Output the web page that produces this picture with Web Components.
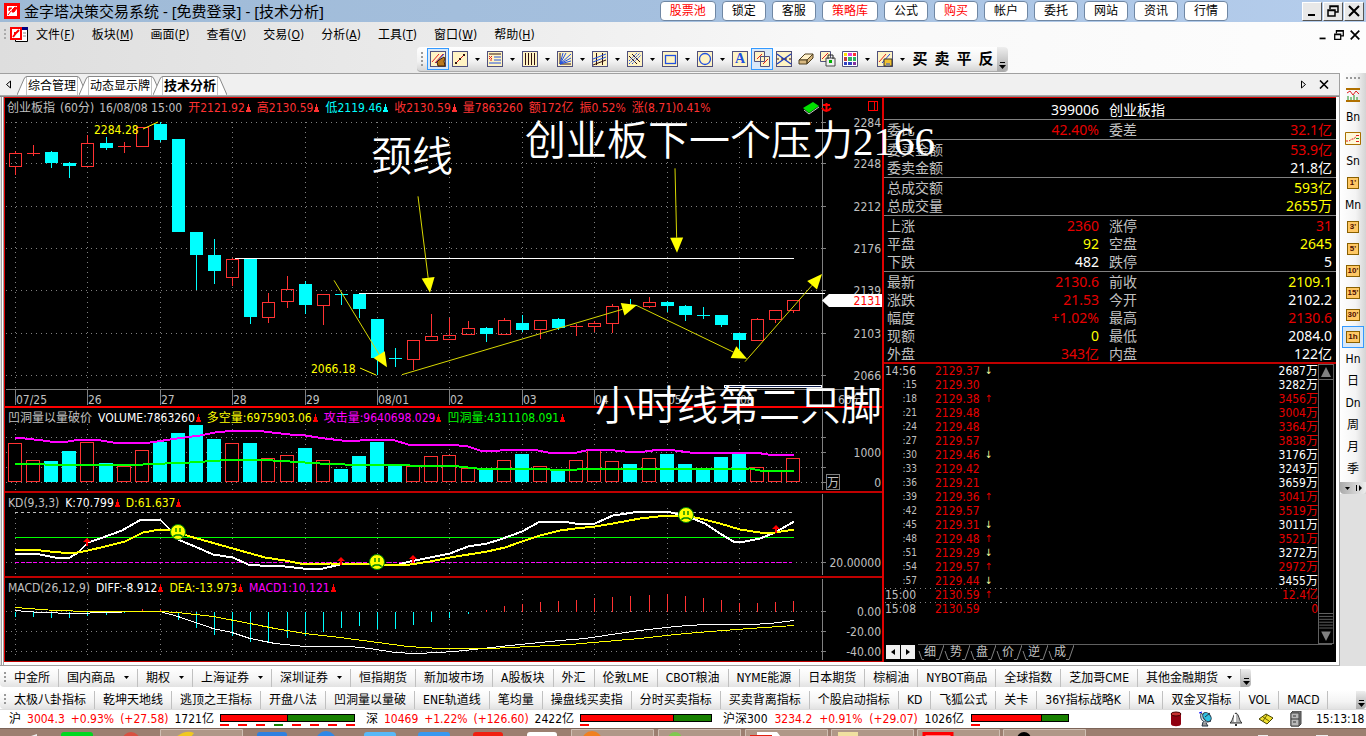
<!DOCTYPE html>
<html lang="zh-CN">
<head>
<meta charset="utf-8">
<title>金字塔决策交易系统</title>
<style>
  html, body { margin: 0; background: #fff; }
  body { font: 12px/16px "DejaVu Sans Condensed", "Noto Sans CJK SC", sans-serif; color: #000; overflow: hidden; }
</style>
</head>
<body>
<trade-app></trade-app>

<script>
const RED = '#ff3232', CYAN = '#00ffff', GREY = '#c0c0c0';

class Base extends HTMLElement {
  connectedCallback() {
    if (this.shadowRoot) return;
    this.attachShadow({ mode: 'open' }).innerHTML =
      `<style>*{box-sizing:border-box} button{font:inherit;color:inherit;margin:0;padding:0;border:0;background:none;white-space:nowrap} svg{display:block;flex:none} ${this.css()}</style>${this.html()}`;
  }
  css() { return ''; }
  html() { return '<slot></slot>'; }
}

/* ---------- icons ---------- */
const frame = inner => `<rect x=".5" y=".5" width="15" height="15" fill="#fff3c4" stroke="#50507c"/>${inner}`;
const ICONS = {
  draw: frame('<path d="M2 11L9 3M5 12l8-9" stroke="#e02020"/><path d="M6 12l8-9" stroke="#2040e0"/><path d="M7 11l2-2 5-3 1 2-1 2 1 5H8z" fill="#b87820" stroke="#402000"/>'),
  line: frame('<path d="M4 12l8-8" stroke="#d01010"/><path d="M3 11h2v2H3zM11 3h2v2h-2zM7 7h2v2H7z" fill="#301010"/>'),
  list: frame('<path d="M2 3h12" stroke="#301010"/><path d="M7 6h7M7 9h7M2 12h12" stroke="#2050e0"/><path d="M2 5l3 3M2 8l3-3M3 9h2" stroke="#e02020"/>'),
  bars: frame('<path d="M3.5 2v12M6.500 2v12M9.500 2v12M12.500 2v12" stroke="#301010"/>'),
  fan: frame('<path d="M3 2v11h11" stroke="#301010" fill="none"/><path d="M3 13L6 2M3 13l6-11M3 13L14 3M3 13l11-6M3 13l11-3" stroke="#2050e0"/>'),
  pitch: frame('<path d="M4.500 2v12M10.500 2v12M1 14l13-5" stroke="#301010"/><path d="M1 8l13-5M1 11l13-5" stroke="#2050e0"/>'),
  chan: frame('<path d="M2 5l8 8M5 3l8 8" stroke="#301010"/><path d="M2 10l8-8M5 13l9-9M2 13L13 2" stroke="#2050e0" stroke-dasharray="2 1"/>'),
  rect: frame('<rect x="3.500" y="4.500" width="10" height="8" fill="none" stroke="#2050e0" stroke-width="1.300"/>'),
  circle: frame('<circle cx="8" cy="8" r="5.500" fill="none" stroke="#2050e0" stroke-width="1.300"/>'),
  copy: '<path d="M.5.5h10v10H.5zM6.500 5.500h9v10h-9z" fill="#fff3c4" stroke="#50507c"/><path d="M3 8l5-5M9 13l5-5" stroke="#e02020"/>',
  cross: frame('<path d="M1 3l14 10M1 13L15 3" stroke="#2040c0" stroke-width="1.4"/><path d="M1 8h14" stroke="#301010" stroke-dasharray="2 2"/>'),
  eraser: '<path d="M1 9l6-6h8l-6 6z" fill="#fff0c8" stroke="#504020"/><path d="M1 9h8v4H1zM9 9l6-6v4l-6 6z" fill="#d8b880" stroke="#504020"/>',
  lock: '<path d="M.5.5h10v10H.5z" fill="#fff3c4" stroke="#50507c"/><path d="M2 8l6-6" stroke="#e02020"/><path d="M6 7h9v8H6z" fill="#eee" stroke="#444"/><path d="M8 8V4h5v4" fill="none" stroke="#222"/><path d="M9 9h3v3H9z" fill="#00b000"/>',
  palette: '<path d="M.5.5h15v15H.5z" fill="#fff" stroke="#50507c"/><path d="M2 2h3v3H2z" fill="#ffe000"/><path d="M6 2h4v3H6z" fill="#e040e0"/><path d="M11 2h3v3h-3z" fill="#ff3030"/><path d="M2 6h3v4H2z" fill="#c04040"/><path d="M6 6h4v4H6zM11 6h3v4h-3z" fill="#30b060"/><path d="M2 11h3v3H2zM6 11h4v3H6z" fill="#3040c0"/><path d="M11 11h3v3h-3z" fill="#8030a0"/>',
  save: frame('<path d="M2 11L9 3" stroke="#e02020"/><path d="M5 12l8-9" stroke="#2040e0"/><path d="M7 8h8v7H7z" fill="#f0c030" stroke="#333"/><path d="M9 12h4v3H9z" fill="#888"/>'),
  trend: '<path d="M1 2h14M1 14h14" stroke="#b07000" stroke-width="2"/><path d="M2 6l3-2 3 4 3-4 3 3" stroke="#e02020" fill="none"/><path d="M3 13V9M6 13v-3M9 13V8M12 13v-3" stroke="#209020"/>',
  flow: '<path d="M.5 1.500h15v12H.5z" fill="#fff8d8" stroke="#a87000"/><path d="M1 10h3l3-2h2l3-4" stroke="#e02020" fill="none" stroke-dasharray="2 1"/><path d="M11 4.500h3M11 10.500h3" stroke="#e02020"/><path d="M11 7.500h3" stroke="#209020"/>',
  db: '<path d="M3 3v10c0 3 10 3 10 0V3z" fill="#900010"/><ellipse cx="8" cy="3" rx="5" ry="2" fill="#c83030" stroke="#400"/>',
  dish: '<path d="M3 2c-2 8 4 11 10 8z" fill="#c8d8e0" stroke="#345"/><ellipse cx="9" cy="6" rx="5" ry="3.500" transform="rotate(50 9 6)" fill="#30c0e0" stroke="#234"/><path d="M7 6l5-4M5 11l-1 4h6l-2-3" stroke="#234" fill="#999"/><path d="M1 2l3-1" stroke="#00f"/>',
  bell: '<path d="M2 12c3-2 3-9 6-10 3 1 3 8 6 10z" fill="#b8b8b8" stroke="#333"/><path d="M7 3v8" stroke="#fff" stroke-width="2"/><path d="M7 13h2v2H7z" fill="#333"/>',
  mail: '<path d="M1 8l7-5 7 4-6 6z" fill="#f0e030" stroke="#444000"/><path d="M5 6l6 4M9 4l-4 6" stroke="#666000"/>',
  cabinet: '<path d="M3 2l2-2h8v13l-2 2H3z" fill="#777" stroke="#444"/><path d="M3 2h8v13H3z" fill="#b8b8b8" stroke="#444"/><path d="M3 8h8M5 5h3M5 11h3" stroke="#333"/>'
};
const icon = (n, s = 16) => `<svg width="${s}" height="${s}" viewBox="0 0 16 16" fill="none" aria-hidden="true">${ICONS[n]}</svg>`;
const caret = '<svg width="5" height="3" viewBox="0 0 5 3" aria-hidden="true"><path d="M0 0h5L2.500 3z"/></svg>';
const more = '<svg width="7" height="7" viewBox="0 0 7 7" aria-hidden="true"><path d="M1 0h5v1H1zM0 3h7L3.500 7z"/></svg>';
const logo = s => `<svg width="${s}" height="${s}" viewBox="0 0 16 16" aria-hidden="true"><path d="M1.500 1.500h13v13h-13z" fill="#fff" stroke="#f00" stroke-width="3"/><path d="M4 12l3-4M5 8V5h3M8 7l3-3 2 1-3 4H8z" stroke="#f00" fill="#f00"/></svg>`;

/* ---------- title bar ---------- */
customElements.define('title-bar', class extends Base {
  css() { return `:host{display:flex;align-items:center;height:22px;padding:0 2px 0 4px;background:linear-gradient(90deg,#9fbad6,#a5c0df 50%,#b5cdec)}
    h1{margin:0 auto 0 4px;font:15px/20px "Noto Sans","Noto Sans CJK SC",sans-serif;white-space:nowrap}
    nav{display:flex;gap:6px;margin-right:74px}
    nav button{height:20px;padding:0 9px;border:1px solid #6f87a4;border-radius:4px;background:#fff;line-height:18px}
    .hot{color:#f00}
    .win{display:flex;gap:1px}
    .win button{display:grid;place-items:center;width:20px;height:19px;background:#e8e8e8;border:1px solid;border-color:#fff #555 #555 #fff}`; }
  html() {
    const b = ['股票池*','锁定','客服','策略库*','公式','购买*','帐户','委托','网站','资讯','行情'];
    return `${logo(16)}<h1>金字塔决策交易系统 - [免费登录] - [技术分析]</h1>
    <nav>${b.map(t => `<button class="${t.endsWith('*') ? 'hot' : ''}">${t.replace('*', '')}</button>`).join('')}</nav>
    <div class="win">${win(14, 2)}</div>`;
  }
});
function win(s, w) {
  return [['最小化', `<path d="M3 11h7" stroke-width="${w}"/>`],
    ['还原', `<path d="M4 5V2h8v6h-3M2 6h7v6H2zM4 2.500h8M2 6.500h7" stroke-width="1.500"/>`],
    ['关闭', `<path d="M2 2l10 10M12 2L2 12" stroke-width="${w}"/>`]]
    .map(([l, p]) => `<button aria-label="${l}"><svg width="${s}" height="${s}" viewBox="0 0 14 14" fill="none" stroke="#000">${p}</svg></button>`).join('');
}

/* ---------- menu bar ---------- */
customElements.define('menu-bar', class extends Base {
  css() { return `:host{display:flex;align-items:center;height:24px;padding:2px 5px 0 4px}
    .grip{width:2px;height:12px;margin-right:4px;background:repeating-linear-gradient(#aaa 0 2px,transparent 2px 4px)}
    nav{display:flex;gap:17px;margin:0 auto 0 8px}
    .win{display:flex;gap:4px}`; }
  html() {
    const m = { 文件:'F', 板块:'M', 画面:'P', 查看:'V', 交易:'O', 分析:'A', 工具:'T', 窗口:'W', 帮助:'H' };
    return `<span class="grip"></span><svg width="18" height="18" viewBox="0 0 18 18" aria-hidden="true"><path d="M5.500 1.500h12v14h-12z" fill="#fff" stroke="#000"/><path d="M5 1h13v3H5z" fill="#000080"/><path d="M13 7h3M13 10h3" stroke="#888"/><path d="M1 2h10v11H1z" fill="#fff" stroke="#f00" stroke-width="2"/><path d="M3 11l3-4M4 7h2M6 7l3-3" stroke="#f00" stroke-width="2"/></svg>
    <nav>${Object.entries(m).map(([t, k]) => `<button>${t}(<u>${k}</u>)</button>`).join('')}</nav>
    <div class="win">${win(12, 2)}</div>`;
  }
});

/* ---------- drawing toolbar ---------- */
customElements.define('draw-toolbar', class extends Base {
  css() { return `:host{display:flex;height:27px;padding:1px 0 0 417px}
    .bar{display:flex;align-items:center;height:25px;border-radius:4px;background:linear-gradient(#fff,#f2f2f2 60%,#d4d4d4);border-bottom:1px solid #aaa}
    .grip{width:2px;height:14px;margin:0 4px;background:repeating-linear-gradient(#999 0 2px,transparent 2px 4px)}
    button{display:grid;place-items:center;width:22px;height:22px}
    .on{border:1px solid #3399ff;background:#d8e8f8}
    .drop{width:13px}
    .cn{font-weight:bold;font-size:15px}
    .abc{width:16px;height:16px;border:1px solid #50507c;background:#fff3c4;color:#2050e0;font:bold 14px/14px "Liberation Serif",serif;text-align:center}
    .cap{display:grid;place-items:end center;width:11px;height:24px;padding-bottom:2px;background:linear-gradient(#eee,#aaa);border-radius:0 4px 4px 0}`; }
  html() {
    const t = [['draw',0,1],['line',1],['list',1],['bars',1],['fan',1],['pitch',1],['chan',1],['rect',1],['circle',1],['A'],['copy',0,1],['cross'],['eraser'],['lock'],['palette',1],['save',1]];
    return `<div class="bar"><span class="grip"></span>${t.map(([n, d, on]) => `<button class="${on ? 'on' : ''}" aria-label="${n}">${n == 'A' ? '<span class="abc">A</span>' : icon(n)}</button>${d ? `<button class="drop" aria-label="${n} ▾">${caret}</button>` : ''}`).join('')}${['买','卖','平','反'].map(c => `<button class="cn">${c}</button>`).join('')}<span class="cap">${more}</span></div>`;
  }
});

/* ---------- document tabs ---------- */
customElements.define('doc-tabs', class extends Base {
  css() { return `:host{display:flex;align-items:center;height:21px;padding:0 8px 0 5px;background:#f0f0f0}
    .tabs{display:flex;align-self:end;margin:0 auto 0 5px}
    .tabs button{display:flex;height:19px;line-height:18px}
    .tabs button+button{margin-left:-8px}
    .tabs i{font-style:normal;border-top:1px solid #888;background:#fff;height:19px;padding:0 1px}
    .on{font-weight:bold;position:relative;font-size:13px}
    .end{display:flex;gap:11px;align-items:center}`; }
  html() {
    const e = d => `<svg width="10" height="19" viewBox="0 0 10 19" aria-hidden="true"><path d="${d}" fill="#fff" stroke="#888"/></svg>`;
    return `<button aria-label="向左"><svg width="7" height="9" viewBox="0 0 7 9"><path d="M5.500 1v7L1.500 4.500z" fill="none" stroke="#000"/></svg></button>
    <div class="tabs">${['综合管理','动态显示牌','技术分析'].map((t, n) => `<button class="${n == 2 ? 'on' : ''}">${e('M0 19L7 3q1-2.500 3-2.500V19')}<i>${t}</i>${e('M10 19L3 3Q2 .5 0 .5V19')}</button>`).join('')}</div>
    <div class="end"><button aria-label="向右"><svg width="7" height="9" viewBox="0 0 7 9"><path d="M1.500 1v7l4-3.500z" fill="none" stroke="#000"/></svg></button>
    <button aria-label="关闭"><svg width="13" height="9" viewBox="0 0 13 9"><path d="M2 .5l8 8M10 .5l-8 8" stroke="#000" stroke-width="1.600"/></svg></button></div>`;
  }
});

/* ---------- charts: vertical values are in thirds of a unit ---------- */
const xs = Array.from({ length: 44 }, (_, i) => Math.round(15 + i * 18.1));
const Y = v => Math.round(v / 3);
const days = ['07/25','26','27','28','29','08/01','02','03','04','05','08'];
const dots = (x1, y1, x2, y2) => `<path d="M${x1} ${y1}.5L${x2} ${y2}.5" stroke="#808080" stroke-dasharray="1 4"/>`;
const vdots = (a, b) => days.map((_, i) => `<path d="M${xs[i * 4]}.5 ${Y(a)}V${Y(b)}" stroke="#808080" stroke-dasharray="1 4"/>`).join('');
const hgrid = list => list.map(z => dots(6, Y(z), 822, Y(z)) + `<path d="M822 ${Y(z)}.5h4" stroke="#808080"/>`).join('');
const axisText = (z, t) => `<text x="881" y="${Y(z) + 5}" text-anchor="end">${t}</text>`;
const poly = (pts, c, w) => `<polyline points="${pts.map(([x, z]) => `${x},${Y(z) + .5}`).join(' ')}" fill="none" stroke="${c}" stroke-width="${w}"/>`;
const axis = (a, b) => `<path d="M822.500 ${a}V${b}" stroke="#808080"/>`;

class ChartPane extends Base {
  css() { return `:host{display:grid;background:#000;border-bottom:2px solid #c00000;color:${GREY}}
    :host([last]){border-bottom-width:1px}
    :host([active]){border-bottom-color:#ff0000}
    svg.plot,.legend{grid-area:1/1}
    svg.plot{width:100%;height:auto;shape-rendering:crispEdges}
    text{font:12px "DejaVu Sans Condensed","Noto Sans CJK SC",sans-serif;fill:${GREY}}
    .smooth{shape-rendering:geometricPrecision}
    .legend{display:flex;gap:6px;align-self:start;padding:2px 2px 0 3px;white-space:nowrap}
    .legend span{display:flex;align-items:center;gap:1px}`; }
  legend(items) {
    return `<div class="legend">${items.map(([t, c, up, uc]) => `<span style="color:${c}">${t}${up ? `<svg width="5" height="8" viewBox="0 0 5 8" aria-hidden="true"><path d="M2 0h1v3h1v3h1v2H0V6h1V3h1z" fill="${uc || '#ff0000'}"/></svg>` : ''}</span>`).join('')}</div>`;
  }
  svg(top, h, body) { return `<svg class="plot" viewBox="5 ${top} 877 ${h}" role="img" aria-label="图表">${body}</svg>`; }
}

customElements.define('price-pane', class extends ChartPane {
  css() { return super.css() + '.legend{padding-left:2px}.legend b{font-weight:normal;margin-right:4px}'; }
  html() {
    const d = [['r',168,175,212,240],['r',150,175,176,183],['c',168,171,204,219],['c',201,204,213,249],['r',120,145,212,212],['c',126,144,159,165],['r',141,153,156,174],['r',97,97,152,152],['c',80,87,135,141],['c',132,132,411,411],['c',411,411,480,585],['c',432,480,528,567],['r',490,492,545,573],['c',490,490,666,687],['r',594,622,665,684],['r',543,583,617,639],['c',558,567,630,657],['r',598,598,629,690],['c',590,597,600,630],['c',597,597,642,669],['c',672,672,789,840],['c',759,789,792,816],['r',736,736,791,825],['r',657,724,734,734],['r',669,721,731,731],['r',678,700,716,719],['c',696,699,717,741],['r',669,676,716,716],['c',660,684,705,711],['r',676,676,703,732],['c',669,672,699,705],['r',686,694,697,723],['r',678,685,692,710],['r',627,634,683,714],['c',612,630,633,645],['r',606,620,632,638],['c',618,621,633,651],['c',630,633,660,678],['c',636,660,663,672],['c',660,660,690,696],['c',714,714,735,766],['r',669,673,734,734],['r',646,646,671,684],['r',616,616,644,654]];
    const candles = d.map(([k, h, t, b, l], i) => {
      const x = xs[i], c = k == 'r' ? RED : CYAN, bh = Math.max(1, Y(b) - Y(t));
      return `<path d="M${x}.5 ${Y(h)}V${Y(t)}M${x}.5 ${Y(b)}V${Y(l)}" stroke="${c}"/>` +
        (k == 'c' || bh < 2 ? `<rect x="${x - 6}" y="${Y(t)}" width="13" height="${bh}" fill="${c}"/>`
          : `<rect x="${x - 6}.5" y="${Y(t)}.5" width="12" height="${bh}" fill="none" stroke="${c}"/>`);
    }).join('');
    const arrow = (x1, a, x2, b) => {
      const y1 = a / 3, y2 = b / 3, L = Math.hypot(x2 - x1, y2 - y1), u = (x2 - x1) / L, v = (y2 - y1) / L, bx = x2 - u * 15, by = y2 - v * 15;
      return `<path d="M${x1} ${y1}L${bx} ${by}" stroke="#d8d800"/><path d="M${x2} ${y2}L${bx - v * 6.5} ${by + u * 6.5}L${bx + v * 6.5} ${by - u * 6.5}z" fill="#ffff00"/>`;
    };
    const g = { 82:2284, 205:2248, 334:2212, 460:2176, 586:2139, 713:2103, 841:2066 };
    return this.svg(3, 308, vdots(80, 883) + hgrid(Object.keys(g)) + Object.entries(g).map(([z, t]) => axisText(z, t)).join('') + axis(4, 310) +
      '<path d="M6 294.500H881" stroke="#808080"/>' +
      days.map((t, i) => `<path d="M${xs[i * 4]}.5 294V310" stroke="#808080"/><text x="${xs[i * 4] + 1}" y="309">${t}</text>`).join('') + '<text x="838" y="309">60分</text>' +
      candles + '<path d="M235 163.500H794M359 198.500H825" stroke="#fff"/>' +
      `<g class="smooth">${arrow(334,556,387,817)}${arrow(402,839,637,630)}${arrow(637,632,747,791)}${arrow(745,800,822,537)}${arrow(418,304,430,593)}${arrow(675,220,677,473)}
        <path d="M143 34l15-7M360 273l16 7" stroke="#ffff00"/><path d="M822 205.500l7-6.500h53v13h-53z" fill="#fff"/></g>` +
      '<text x="94" y="39" style="fill:#ff0">2284.28</text><text x="311" y="278" style="fill:#ff0">2066.18</text><text x="881" y="210" text-anchor="end" style="fill:#f00">2131</text>' +
      '<rect x="724.500" y="290.500" width="97" height="2" fill="#102050" stroke="#fff"/>' +
      '<g class="smooth"><path d="M803 13l10-6 6 4-10 7z" fill="#00e000"/><path d="M804 15l5 4 10-7" stroke="#ccc" fill="none"/><path d="M826.500 8v8M823 10h7M822 13q4 6 9 0" stroke="#f00" stroke-width="2" fill="none"/></g><path d="M868.500 6.500h9v9h-9zM874.500 6v9" fill="none" stroke="#f00"/>')
      + this.legend([['<b>创业板指</b><b>(60分)</b>16/08/08 15:00', GREY], ['开2121.92', RED, 1, RED], ['高2130.59', RED, 1, RED], ['低2119.46', CYAN, 1, CYAN], ['收2130.59', RED, 1, RED], ['量7863260', RED], ['额172亿', RED], ['振0.52%', RED], ['涨(8.71)0.41%', RED]]);
  }
});

customElements.define('volume-pane', class extends ChartPane {
  html() {
    const v = 'r175 r226 c228 c198 r172 c234 r242 r196 c171 c144 c120 c162 r175 c174 r220 r211 c189 r226 c252 c213 c171 c243 r244 r214 r211 r250 c255 r226 c207 r244 c255 r226 r195 r229 c237 r220 c207 c237 c250 c216 c207 r247 r256 r220'.split(' ');
    const bars = v.map((s, i) => { const y = Y(s.slice(1)), x = xs[i] - 7;
      return s[0] == 'c' ? `<rect x="${x}" y="${y}" width="14" height="${97 - y}" fill="${CYAN}"/>` : `<rect x="${x}.5" y="${y}.5" width="13" height="${96 - y}" fill="#000" stroke="${RED}"/>`; }).join('');
    const m = [[15,156],[25,159],[43,166],[50,168],[68,168],[80,162],[95,162],[113,171],[143,174],[150,171],[177,160],[200,150],[215,142],[235,135],[255,136],[272,141],[290,148],[305,149],[325,160],[342,164],[360,164],[380,162],[395,165],[408,176],[450,177],[468,183],[480,194],[500,194],[515,191],[533,193],[548,201],[577,201],[590,192],[605,191],[625,197],[645,198],[660,193],[675,194],[690,201],[755,201],[768,206],[794,206]];
    const g = [[15,234],[45,237],[105,237],[120,240],[143,238],[165,234],[190,232],[205,227],[235,222],[255,223],[290,228],[320,233],[345,237],[395,237],[410,240],[450,240],[477,248],[540,248],[550,252],[577,252],[590,248],[680,248],[690,252],[750,249],[760,254],[794,254]];
    return this.svg(23, 83, vdots(118, 315) + hgrid([157,202,247,292]) + axis(24, 105) + bars + poly(m, '#ff00ff', 2) + poly(g, '#00ff00', 2) +
      axisText(202, '1000') + axisText(292, '0') + '<rect x="826.500" y="89.500" width="13" height="15" fill="#000" stroke="#808080"/><text x="827" y="102">万</text>')
      + this.legend([['凹洞量以量破价', GREY], ['VOLUME:7863260', '#fff', 1], ['多空量:6975903.06', '#ff0', 1], ['攻击量:9640698.029', '#f0f', 1], ['凹洞量:4311108.091', '#0f0', 1]]);
  }
});

customElements.define('kd-pane', class extends ChartPane {
  html() {
    const k = [[15,507],[35,503],[55,517],[70,516],[78,500],[88,470],[100,460],[122,435],[141,402],[160,402],[168,425],[178,462],[195,483],[213,507],[233,517],[248,537],[260,541],[285,543],[303,549],[323,549],[340,537],[360,534],[395,540],[410,528],[450,503],[468,482],[487,475],[500,462],[522,437],[540,408],[563,408],[575,413],[595,414],[613,390],[640,379],[667,378],[675,385],[695,402],[705,415],[720,445],[735,470],[745,468],[760,459],[775,440],[794,407]];
    const d = [[15,491],[32,492],[50,499],[72,504],[88,496],[105,483],[125,467],[143,442],[160,431],[170,435],[190,452],[215,475],[240,495],[265,515],[285,525],[305,537],[330,534],[375,536],[410,537],[430,527],[450,517],[487,497],[505,486],[522,467],[540,450],[560,434],[575,428],[595,424],[613,413],[640,400],[667,391],[685,390],[700,400],[720,413],[740,433],[760,441],[775,440],[794,432]];
    const face = (x, z) => `<g class="smooth" transform="translate(${x} ${Y(z)})"><circle r="7.500" fill="#ff0" stroke="#080"/><path d="M-2 -4v4M2 -4v4M-4 5v-1l2-1h4l2 1v1" fill="none" stroke="#080" stroke-width="1.400"/></g>`;
    const up = (x, z) => `<path class="smooth" d="M${x} ${Y(z) - 4}l4 4h-3v4h-2v-4h-3z" fill="#f00"/>`;
    return this.svg(108, 83, vdots(370, 570) + hgrid([532]) + axis(109, 190) +
      '<path d="M15 127.500H792" stroke="#c0c0c0" stroke-dasharray="3 3"/><path d="M15 152.500H794" stroke="#00ff00"/><path d="M15 177.500H792" stroke="#ff00ff" stroke-dasharray="4 2"/>' +
      poly(k, '#fff', 2) + poly(d, '#ff0', 2) + face(178,441) + face(377,532) + face(686,391) + up(87,470) + up(341,528) + up(413,523) + up(776,432) + axisText(532, '20.00000'))
      + this.legend([['KD(9,3,3)', GREY], ['K:70.799', '#fff', 1], ['D:61.637', '#ff0', 1]]);
  }
});

customElements.define('macd-pane', class extends ChartPane {
  html() {
    const h = [696,696,699,699,693,690,684,672,672,705,729,750,753,771,771,759,753,741,729,723,732,732,720,711,699,687,675,663,657,651,648,645,640,636,633,630,628,633,640,645,653,654,651,648];
    const bars = h.map((z, i) => `<path d="M${xs[i]}.5 227V${Y(z)}" stroke="${z > 680 ? CYAN : RED}"/>`).join('');
    const a = [[15,676],[40,682],[75,685],[105,682],[140,678],[160,677],[178,693],[213,729],[232,740],[250,760],[275,774],[305,783],[350,784],[370,790],[395,801],[415,804],[440,800],[465,795],[500,783],[530,773],[560,764],[585,760],[605,750],[640,734],[675,724],[705,718],[750,718],[770,714],[794,706]];
    const b = [[15,667],[55,674],[90,677],[120,679],[160,677],[178,680],[213,693],[250,713],[275,728],[305,743],[340,757],[378,772],[408,783],[440,790],[490,790],[530,783],[570,777],[605,768],[640,758],[675,746],[710,737],[750,730],[794,721]];
    return this.svg(193, 83, vdots(627, 822) + hgrid([679,739,799]) + axis(194, 275) + bars + poly(a, '#fff', 1) + poly(b, '#ff0', 1) +
      axisText(679, '0.00') + axisText(739, '-20.00') + axisText(799, '-40.00'))
      + this.legend([['MACD(26,12,9)', GREY], ['DIFF:-8.912', '#fff', 1], ['DEA:-13.973', '#ff0', 1], ['MACD1:10.121', '#f0f', 1]]);
  }
});

/* free-hand captions placed by the user over the charts */
customElements.define('chart-note', class extends Base {
  css() { return ':host{position:absolute;z-index:2;color:#fff;font:350 41px/41px "Liberation Serif","Noto Sans CJK SC DemiLight","Noto Sans CJK SC",serif;white-space:nowrap}'; }
});

customElements.define('chart-area', class extends Base {
  css() { return ':host{display:block;position:relative;flex:1;min-width:0;border:solid #e00000;border-width:0 2px 0 1px}'; }
  html() { return `<price-pane active></price-pane><volume-pane></volume-pane><kd-pane></kd-pane><macd-pane last></macd-pane>
    <chart-note style="left:366px;top:39px">颈线</chart-note><chart-note style="left:520px;top:23px">创业板下一个压力2166</chart-note><chart-note style="left:590px;top:288px">小时线第二只脚</chart-note>`; }
});

/* ---------- quote panel ---------- */
customElements.define('quote-table', class extends Base {
  css() { return `:host{display:block;color:${GREY};font:14px/18px "Noto Sans","Noto Sans CJK SC",sans-serif}
    table{width:100%;border-collapse:separate;border-spacing:0;table-layout:fixed;border-bottom:1px solid #808080;padding:0 4px 1px 3px}
    table:last-child{border-bottom:2px solid #c00000;padding-bottom:0}
    col.l{width:60px} col.v{width:152px} col.m{width:70px}
    th,td{padding:0;height:18px;line-height:16px;vertical-align:bottom;font-weight:normal;text-align:left;white-space:nowrap}
    th+td{text-align:right} td+th{padding-left:10px}
    .head th,.head td{color:#fff;padding-top:2px;height:20px}
    table:last-child td{height:18px}
    .r{color:#e60000}.y{color:#ff0}.w{color:#fff}`; }
  html() {
    const G = [
      [['','399006 w','创业板指','']],
      [['委比','42.40% r','委差','32.1亿 r']],
      [['委买金额','','','53.9亿 r'],['委卖金额','','','21.8亿 w']],
      [['总成交额','','','593亿 y'],['总成交量','','','2655万 y']],
      [['上涨','2360 r','涨停','31 r'],['平盘','92 y','空盘','2645 y'],['下跌','482 w','跌停','5 w']],
      [['最新','2130.6 r','前收','2109.1 y'],['涨跌','21.53 r','今开','2102.2 w'],['幅度','+1.02% r','最高','2130.6 r'],['现额','0 y','最低','2084.0 w'],['外盘','343亿 r','内盘','122亿 w']]
    ];
    const td = s => { const [t = '', c = ''] = s.split(' '); return `<td class="${c}">${t}</td>`; };
    return G.map((g, i) => `<table class="${i ? '' : 'head'}"><colgroup><col class="l"><col class="v"><col class="m"><col></colgroup>${g.map(r => `<tr><th>${r[0]}</th>${td(r[1])}<th>${r[2]}</th>${td(r[3])}</tr>`).join('')}</table>`).join('');
  }
});

customElements.define('tick-list', class extends Base {
  css() { return `:host{display:flex;flex:1;align-items:stretch;padding:0 2px 0 1px;color:${GREY}}
    table{flex:1;align-self:start;border-collapse:separate;border-spacing:0;table-layout:fixed;width:0}
    col.t{width:50px} col.p{width:50px} col.a{width:16px}
    td,th{height:14px;padding:0;line-height:14px;font-weight:normal;text-align:left;white-space:nowrap}
    td:last-child{text-align:right}
    th.s{font-size:10px;text-align:right;padding-right:18px;line-height:12px}
    tr.dot td,tr.dot th{background:repeating-linear-gradient(90deg,#808080 0 1px,transparent 1px 5px) top/100% 1px no-repeat}
    .r{color:#e60000}.w{color:#fff}.u{color:#e60000}.d{color:#ffffa0}
    .u,.d{font-size:10px}
    .sb{display:flex;flex-direction:column;justify-content:space-between;width:16px;border:1px solid #606060}
    .sb svg+svg{border-top:1px solid #606060}`; }
  html() {
    const R = `14:56 2129.37 ↓ 2687万 w|:15 2129.30 - 3282万 w|:18 2129.38 ↑ 3456万 r|:21 2129.48 - 3004万 r|:24 2129.48 - 3364万 r|:27 2129.57 - 3838万 r|:30 2129.46 ↓ 3176万 w|:33 2129.42 - 3243万 w|:36 2129.21 - 3659万 w|:39 2129.36 ↑ 3041万 r|:42 2129.57 - 3519万 r|:45 2129.31 ↓ 3011万 w|:48 2129.48 ↑ 3521万 r|:51 2129.29 ↓ 3272万 w|:54 2129.57 ↑ 2972万 r|:57 2129.44 ↓ 3455万 w|15:00 2130.59 ↑ 12.4亿 r|15:08 2130.59 - 0 r`.split('|').map(s => s.split(' '));
    return `<table><colgroup><col class="t"><col class="p"><col class="a"><col></colgroup>${R.map(([t, p, a, v, c], i) => `<tr class="${i > 15 ? 'dot' : ''}"><th class="${t[0] == ':' ? 's' : ''}">${t}</th><td class="r">${p}</td><td class="${a == '↑' ? 'u' : 'd'}">${a == '-' ? '' : a}</td><td class="${c}">${v}</td></tr>`).join('')}</table>
    <div class="sb" aria-hidden="true"><svg width="14" height="15" viewBox="0 0 14 15"><path d="M7 2l5 10H2z" fill="#808080"/><path d="M0 14.500h14" stroke="#606060"/></svg>
    <svg width="14" height="30" viewBox="0 0 14 30"><path d="M0 2.500h14M0 5.500h14M0 8.500h14M0 11.500h14M0 14.500h14" stroke="#606060"/><path d="M7 28L2 18h10z" fill="#808080"/></svg></div>`;
  }
});

customElements.define('quote-tabs', class extends Base {
  css() { return `:host{display:flex;height:18px;padding:0 4px 1px 2px;color:${GREY}}
    .n{display:grid;place-items:center;width:14px;height:14px;margin:1px 1px 0 0;background:#f0f0f0}
    .t{display:flex;flex:1;border-top:1px solid #606060;margin-left:2px}
    .t button{width:26px;height:15px;line-height:15px;display:flex;font-size:12px}`; }
  html() {
    return `<button class="n" aria-label="上一页"><svg width="4" height="6" viewBox="0 0 4 6"><path d="M4 0v6L0 3z"/></svg></button><button class="n" aria-label="下一页"><svg width="4" height="6" viewBox="0 0 4 6"><path d="M0 0v6l4-3z"/></svg></button>
    <div class="t">${['细','势','盘','价','逆','成'].map(c => `<button><svg width="6" height="15" viewBox="0 0 6 15" aria-hidden="true"><path d="M1 6l3 8.500h2" stroke="#808080" fill="none"/></svg>${c}<svg width="8" height="15" viewBox="0 0 8 15" aria-hidden="true"><path d="M0 14.500h3L8 0" stroke="#808080" fill="none"/></svg></button>`).join('')}</div>`;
  }
});

customElements.define('quote-panel', class extends Base {
  css() { return ':host{display:flex;flex-direction:column;width:452px;background:#000}'; }
  html() { return '<quote-table></quote-table><tick-list></tick-list><quote-tabs></quote-tabs>'; }
});

/* ---------- period bar at the right edge ---------- */
customElements.define('period-bar', class extends Base {
  css() { return `:host{display:block;width:26px;background:#e0e0e0}
    .bar{display:flex;flex-direction:column;align-items:center;padding-top:4px;background:linear-gradient(90deg,#fff,#f4f4f4 60%,#d4d4d4)}
    .grip{width:14px;height:2px;margin-bottom:5px;background:repeating-linear-gradient(90deg,#999 0 2px,transparent 2px 4px)}
    button{display:grid;place-items:center;width:22px;height:22px}
    .on{border:1px solid #3399ff;background:#d8e8f8}
    i{font:bold 8px/10px "Liberation Sans",sans-serif;min-width:12px;height:12px;padding:0 1px;text-align:center;border:1px solid #8a6000;background:#ffc864;color:#501000}
    .cap{display:flex;justify-content:center;align-items:center;gap:6px;width:100%;height:12px;margin-top:2px;background:linear-gradient(90deg,#aaa,#eee);border-radius:0 0 4px 4px}`; }
  html() {
    const p = ['@trend','Bn','@flow','Sn',"#1'",'Mn',"#3'","#5'","#10'","#15'","#30'",'#1h','Hn','日','Dn','周','月','季'];
    return `<div class="bar"><span class="grip"></span>${p.map(t => t[0] == '@' ? `<button aria-label="${t.slice(1)}">${icon(t.slice(1))}</button>` : t[0] == '#' ? `<button class="${t == '#1h' ? 'on' : ''}"><i>${t.slice(1)}</i></button>` : `<button>${t}</button>`).join('')}<span class="cap">${caret}<svg width="6" height="6" viewBox="0 0 6 6"><path d="M0 0h1v6H0zM3 0l3 3-3 3z"/></svg></span></div>`;
  }
});

/* ---------- bottom link bars ---------- */
customElements.define('link-bar', class extends Base {
  css() { return `:host{display:flex;align-items:center;height:19px;background:linear-gradient(#fff,#f4f4f4 60%,#e2e2e2);border-radius:4px;overflow:hidden}
    .grip{width:2px;height:12px;margin:0 0 0 4px;background:repeating-linear-gradient(#999 0 2px,transparent 2px 4px)}
    button{display:flex;align-items:center;gap:9px;height:18px;padding:0 8px;border-right:1px solid #c0c0c0}
    .cap{display:grid;place-items:end center;width:10px;height:18px;padding-bottom:2px;background:linear-gradient(#eee,#aaa)}
    :host([wide]) .cap{margin-left:auto}`; }
  html() {
    const items = this.getAttribute('items').split(',');
    return `<span class="grip"></span>${items.map(t => `<button>${t.replace('▾', '')}${t.includes('▾') ? caret : ''}</button>`).join('')}<span class="cap">${more}</span>`;
  }
});

/* ---------- status bar ---------- */
customElements.define('index-quote', class extends Base {
  css() { return `:host{display:flex;justify-content:space-between;align-items:center;width:357px;padding-right:11px;white-space:nowrap}
    .r{color:#f00}
    .bar{display:flex;height:8px;border:1px solid #000;background:#188000}
    .bar b{background:#f00;border-right:1px solid #000}
    .gauge{display:flex;flex-direction:column;gap:2px;padding-top:2px}`; }
  html() {
    const a = n => this.getAttribute(n), [w, r] = a('bar').split(' ');
    return `<span>${a('name')}</span><span class="r">${a('price')}</span><span class="r">${a('pct')}</span><span class="r">(${a('diff')})</span><span>${a('amount')}</span>
    <span class="gauge" aria-hidden="true"><span class="bar" style="width:${w}px"><b style="width:${r}px"></b></span>
    <svg width="${w}" height="2" viewBox="0 0 ${w} 2">${a('dash').split('').map((c, i) => `<path d="M${i * 18} 0h9v2h-9z" fill="${c == 'g' ? '#188000' : '#f00'}"/>`).join('')}</svg></span>`;
  }
});
customElements.define('status-bar', class extends Base {
  css() { return `:host{display:flex;height:19px;align-items:center;padding-left:9px;background:#fff;border-top:1px solid #ddd}
    .ic{display:flex;gap:14px;margin-left:auto;padding-right:12px} .ic button{width:16px;height:16px}
    time{width:50px}`; }
  html() {
    return `<index-quote name="沪" price="3004.3" pct="+0.93%" diff="+27.58" amount="1721亿" bar="135 67" dash="rrrgrrrr"></index-quote>
    <index-quote name="深" price="10469" pct="+1.22%" diff="+126.60" amount="2422亿" bar="132 93" dash="r"></index-quote>
    <index-quote name="沪深300" price="3234.2" pct="+0.91%" diff="+29.07" amount="1026亿" bar="98 70" dash="r"></index-quote>
    <div class="ic">${['db','dish','bell','mail','cabinet'].map(n => `<button aria-label="${n}">${icon(n)}</button>`).join('')}</div><time>15:13:18</time>`;
  }
});

/* top sliver of the desktop task bar */
customElements.define('task-strip', class extends Base {
  css() { return ':host{display:block;height:8px;background:#9c7f70;border-top:1px solid #7c6458;overflow:hidden}'; }
  html() {
    const c = [[61,'#00d820',32],[257,'#2f80e0',30],[364,'#58b8f8',32],[418,'#3898f0',32],[473,'#f02010',30],[527,'#fff',30]];
    const w = [160,571,658,745,831,917,1003].map(x => `<path d="M${x}.5 8V.5h82V8" fill="#b09888" stroke="#d0c0b4"/>`).join('');
    return `<svg width="1366" height="8" viewBox="0 0 1366 8" aria-hidden="true">${w}${c.map(([x, f, n]) => `<rect x="${x}" y="3" width="${n}" height="9" rx="3" fill="${f}"/>`).join('')}
    <circle cx="131" cy="12" r="9" fill="#d85040"/><circle cx="326" cy="12" r="10" fill="#2f88e8"/><path d="M176 8q10-8 18-4l-3 4z" fill="#f0c820"/><circle cx="592" cy="12" r="10" fill="#f08020"/><circle cx="675" cy="10" r="7" fill="#80c850"/><path d="M757 3h20l4 5h-24z" fill="#fff"/><path d="M750 6h22v2h-22z" fill="#e02010"/><path d="M838 3h20v5h-20z" fill="#f0e0a0"/><path d="M924 4.500h28V8h-28z" fill="#fff" stroke="#f00" stroke-width="3"/><circle cx="1024" cy="10" r="7"/><path d="M28 8l9-3v3zM1258 6h10v2h-10zM1316 6h12v2h-12z" fill="#eee"/></svg>`;
  }
});

customElements.define('trade-app', class extends Base {
  css() { return `:host{display:block}
    .top{background:linear-gradient(90deg,#dedede,#ececec 35%,#f8f8f8 60%,#fdfdfd)}
    main{display:flex}
    .doc{flex:1;min-width:0;border:solid #a0a0a0;border-width:1px 1px 1px 0}
    .body{display:flex;padding:0 3px 3px 4px;background:linear-gradient(90deg,#e0e0e0 1px,#a0a0a0 1px 2px,#fff 2px 3px,#a0a0a0 3px 4px,#fff 4px)}
    .inner{display:flex;flex:1;min-width:0;border-top:1px solid #e00000}
    .rule{height:2px;background:#888;border-top:1px solid #aaa}
    .links{display:grid;gap:3px;padding-top:2px;background:#fff}
    link-bar{justify-self:start} link-bar[wide]{justify-self:stretch}`; }
  html() {
    return `<header><title-bar></title-bar><div class="top"><menu-bar></menu-bar><draw-toolbar></draw-toolbar></div></header>
    <main><div class="doc"><doc-tabs></doc-tabs><div class="rule"></div><div class="body"><div class="inner"><chart-area></chart-area><quote-panel></quote-panel></div></div></div><period-bar></period-bar></main>
    <footer><div class="links">
    <link-bar items="中金所,国内商品▾,期权▾,上海证券▾,深圳证券▾,恒指期货,新加坡市场,A股板块,外汇,伦敦LME,CBOT粮油,NYME能源,日本期货,棕榈油,NYBOT商品,全球指数,芝加哥CME,其他金融期货▾"></link-bar>
    <link-bar wide items="太极八卦指标,乾坤天地线,逃顶之王指标,开盘八法,凹洞量以量破,ENE轨道线,笔均量,操盘线买卖指,分时买卖指标,买卖背离指标,个股启动指标,KD,飞狐公式,关卡,36Y指标战略K,MA,双金叉指标,VOL,MACD"></link-bar>
    </div><status-bar></status-bar><task-strip></task-strip></footer>`;
  }
});
</script>
</body>
</html>
